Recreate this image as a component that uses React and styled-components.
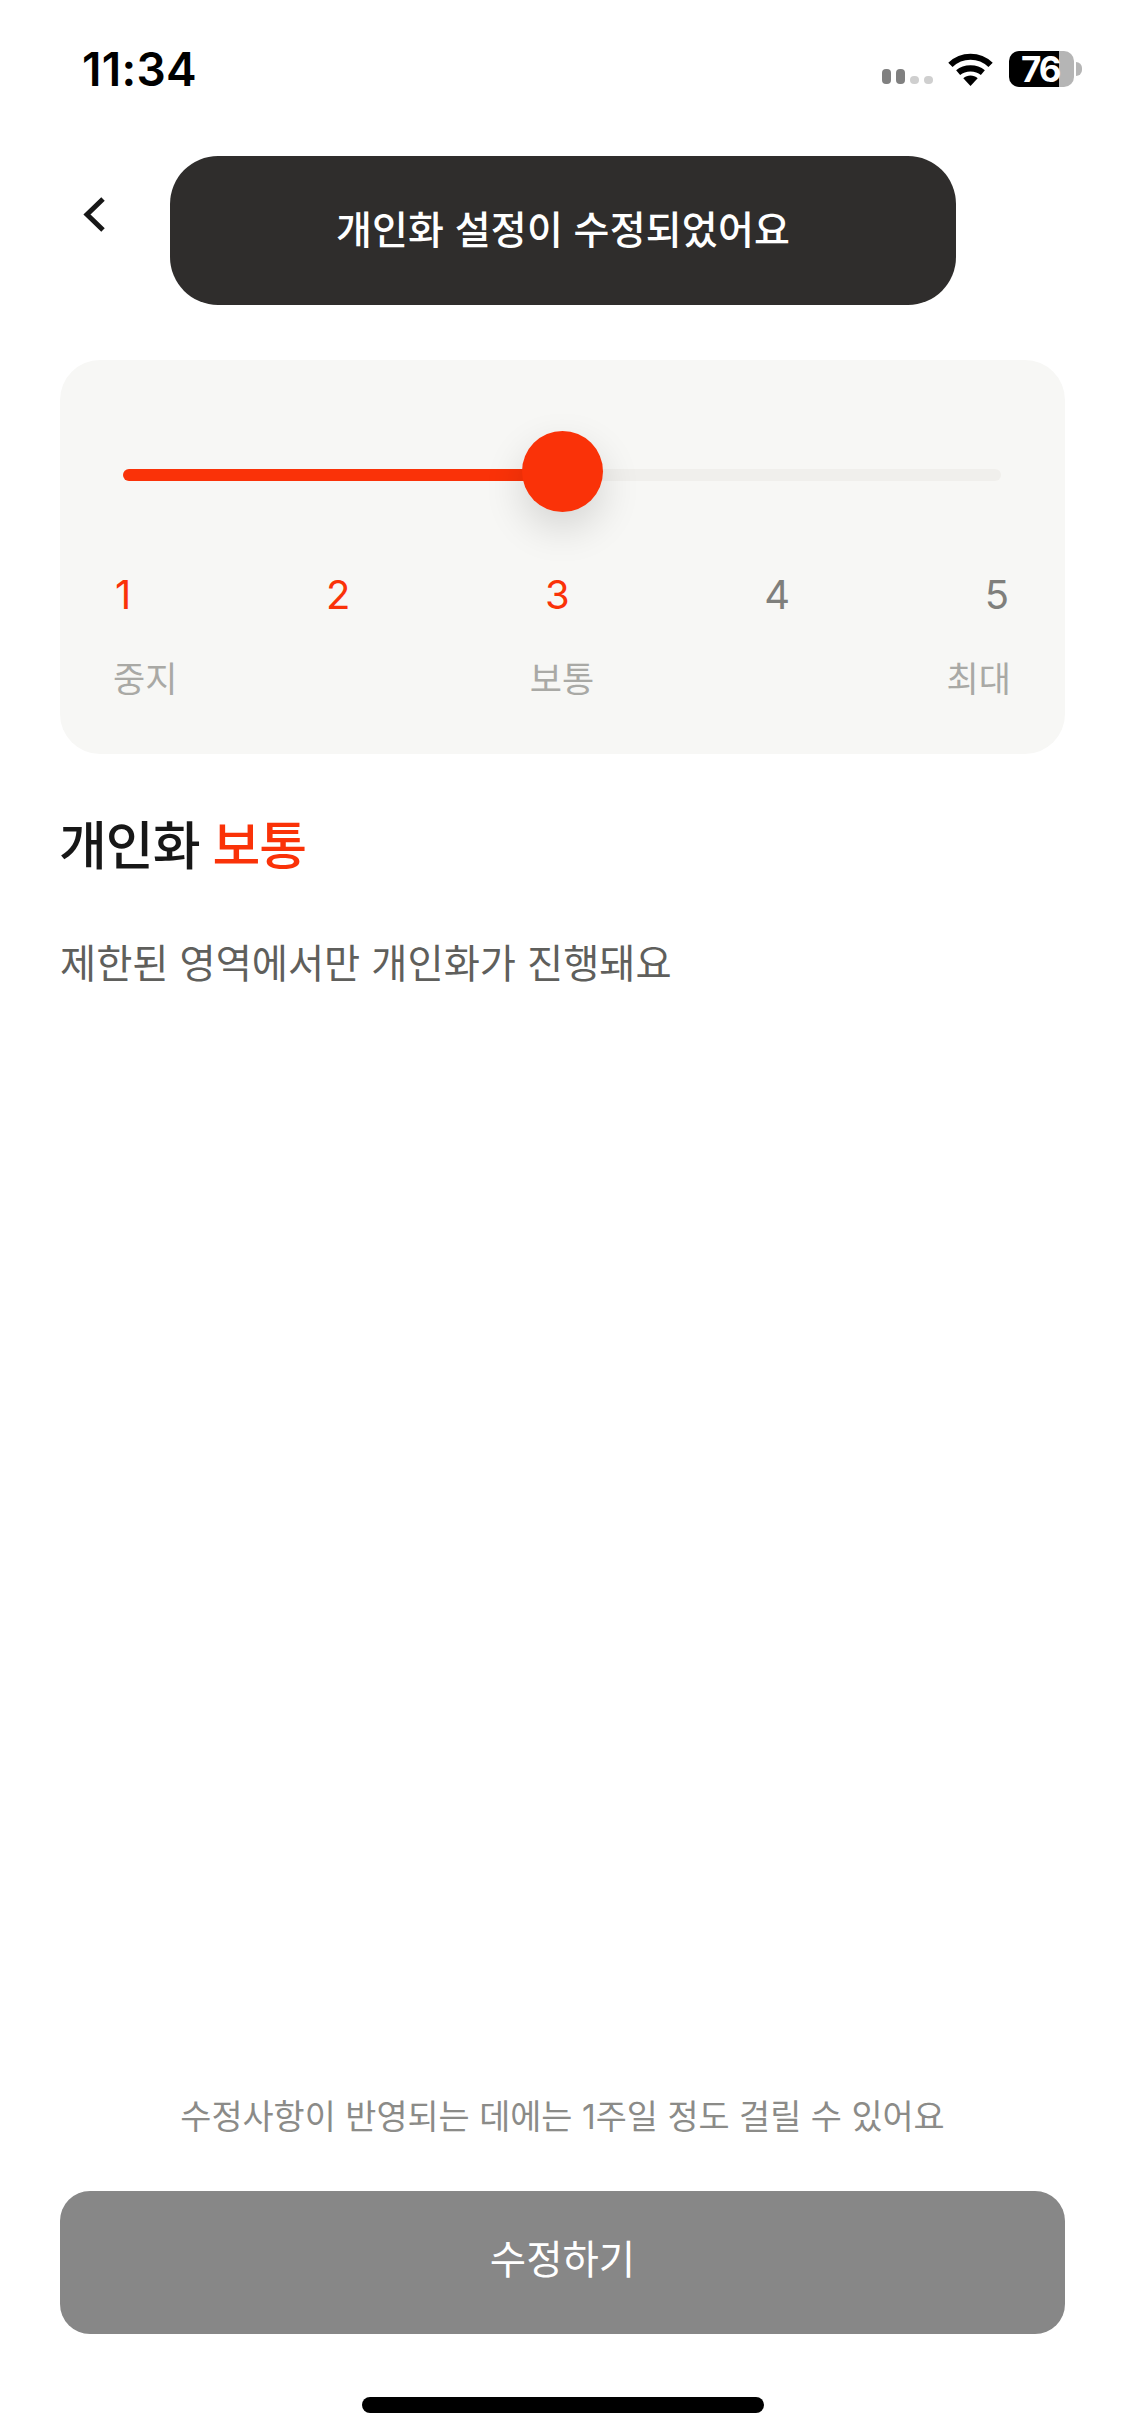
import React from "react";
import styled, { createGlobalStyle } from "styled-components";

const ACCENT = "#fa3208";
const LEVELS = [1, 2, 3, 4, 5];
const CURRENT = 3;

const GlobalStyle = createGlobalStyle`
  html, body {
    margin: 0;
    padding: 0;
    background: #fff;
  }
  body {
    font-family: Inter, "Noto Sans CJK KR", sans-serif;
  }
  * {
    box-sizing: border-box;
  }
`;

const Page = styled.div`
  position: relative;
  width: 1125px;
  height: 2436px;
  display: flex;
  flex-direction: column;
  overflow: hidden;
  background: #fff;
`;

const StatusBar = styled.div`
  height: 138px;
  flex: none;
  display: flex;
  align-items: center;
  padding: 0 43px 0 82px;
`;

const Time = styled.div`
  font-size: 46px;
  font-weight: 600;
  letter-spacing: 0.3px;
  color: #000;
  margin-right: auto;
`;

const Signal = styled.div`
  display: flex;
  align-items: flex-end;
  gap: 5px;
  margin-top: 15px;
  margin-right: 14px;
`;

const SignalBar = styled.span`
  width: 9px;
  height: ${({ $on }) => ($on ? "15px" : "8px")};
  border-radius: 4px;
  background: ${({ $on }) => ($on ? "#808080" : "#cfcfcf")};
`;

const Battery = styled.div`
  width: 65px;
  height: 36px;
  margin-left: 15px;
  padding-left: 12px;
  border-radius: 10px;
  background: linear-gradient(to right, #000 50px, #b5b5b5 50px);
  color: #fff;
  font-size: 35px;
  font-weight: 700;
  letter-spacing: -2px;
  line-height: 36px;
`;

const BatteryNub = styled.span`
  width: 6px;
  height: 14px;
  margin-left: 2px;
  border-radius: 0 7px 7px 0;
  background: #b5b5b5;
`;

const Nav = styled.div`
  height: 222px;
  flex: none;
  padding: 58px 0 0 83px;
`;

const Toast = styled.div`
  position: absolute;
  top: 156px;
  left: 170px;
  width: 786px;
  height: 149px;
  display: flex;
  align-items: center;
  justify-content: center;
  padding-bottom: 7px;
  border-radius: 48px;
  background: #2f2d2c;
  color: #fff;
  font-size: 39px;
  font-weight: 500;
  letter-spacing: 0.2px;
`;

const Content = styled.main`
  flex: 1;
  display: flex;
  flex-direction: column;
  padding: 0 60px 23px;
`;

const Card = styled.section`
  height: 394px;
  flex: none;
  padding-top: 109px;
  border-radius: 40px;
  background: #f7f7f5;
`;

const Track = styled.div`
  position: relative;
  height: 12px;
  margin: 0 64px 0 63px;
  border-radius: 6px;
  background: #f0efec;
`;

const TrackFill = styled.div`
  width: 50%;
  height: 100%;
  border-radius: 6px;
  background: ${ACCENT};
`;

const Thumb = styled.div`
  position: absolute;
  top: -38px;
  left: 50%;
  width: 81px;
  height: 81px;
  margin-left: -40px;
  border-radius: 50%;
  background: ${ACCENT};
  box-shadow: 0 16px 40px rgba(0, 0, 0, 0.14);
`;

const Numbers = styled.div`
  display: flex;
  justify-content: space-between;
  margin-top: 90px;
  padding: 0 56px 0 55px;
`;

const Number = styled.span`
  font-size: 40px;
  line-height: 48px;
  color: ${({ $active }) => ($active ? ACCENT : "#7f7f7c")};
`;

const Labels = styled.div`
  display: flex;
  justify-content: space-between;
  margin-top: 38px;
  padding: 0 54px 0 53px;
`;

const Label = styled.span`
  font-size: 35px;
  line-height: 44px;
  color: #a9a9a5;
`;

const Heading = styled.h1`
  margin: 61px 0 0 -1px;
  font-size: 52px;
  font-weight: 500;
  line-height: 64px;
  letter-spacing: -1px;
  color: #171717;
`;

const Accent = styled.span`
  color: ${ACCENT};
`;

const Description = styled.p`
  margin: 57px 0 0;
  font-size: 39.3px;
  line-height: 56px;
  color: #5f5f5c;
`;

const Notice = styled.p`
  margin: auto 0 50px;
  font-size: 33.8px;
  line-height: 48px;
  text-align: center;
  color: #8b8b88;
`;

const SubmitButton = styled.button`
  height: 143px;
  flex: none;
  padding: 0 0 12px;
  border: none;
  border-radius: 30px;
  background: #878787;
  color: #fff;
  font-family: inherit;
  font-size: 39.5px;
  font-weight: 400;
`;

const HomeIndicator = styled.div`
  width: 402px;
  height: 16px;
  flex: none;
  align-self: center;
  margin-top: 63px;
  border-radius: 8px;
  background: #000;
`;

function WifiIcon() {
  return (
    <svg width="47" height="34" viewBox="0 0 45 33" fill="none">
      <path d="M3 12.5C14 2 31 2 42 12.5" stroke="#000" strokeWidth="6" />
      <path d="M10.5 20C17 14.5 28 14.5 34.5 20" stroke="#000" strokeWidth="6" />
      <path d="M22.5 33L15.5 25.5C19.5 22 25.5 22 29.5 25.5Z" fill="#000" />
    </svg>
  );
}

function BackIcon() {
  return (
    <svg width="24" height="37" viewBox="0 0 24 37" fill="none">
      <path d="M20 3L4 18.5L20 34" stroke="#171717" strokeWidth="5" />
    </svg>
  );
}

export default function App() {
  return (
    <Page>
      <GlobalStyle />
      <StatusBar>
        <Time>11:34</Time>
        <Signal>
          <SignalBar $on />
          <SignalBar $on />
          <SignalBar />
          <SignalBar />
        </Signal>
        <WifiIcon />
        <Battery>76</Battery>
        <BatteryNub />
      </StatusBar>
      <Nav>
        <BackIcon />
      </Nav>
      <Toast>개인화 설정이 수정되었어요</Toast>
      <Content>
        <Card>
          <Track>
            <TrackFill />
            <Thumb />
          </Track>
          <Numbers>
            {LEVELS.map((level) => (
              <Number key={level} $active={level <= CURRENT}>
                {level}
              </Number>
            ))}
          </Numbers>
          <Labels>
            <Label>중지</Label>
            <Label>보통</Label>
            <Label>최대</Label>
          </Labels>
        </Card>
        <Heading>
          개인화 <Accent>보통</Accent>
        </Heading>
        <Description>제한된 영역에서만 개인화가 진행돼요</Description>
        <Notice>수정사항이 반영되는 데에는 1주일 정도 걸릴 수 있어요</Notice>
        <SubmitButton>수정하기</SubmitButton>
        <HomeIndicator />
      </Content>
    </Page>
  );
}
